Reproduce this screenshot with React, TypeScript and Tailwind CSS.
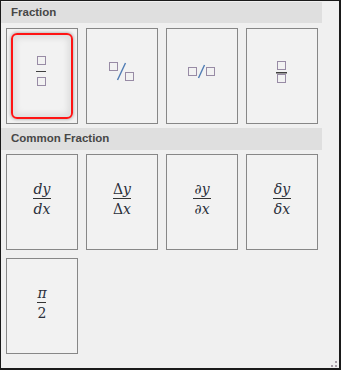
import React from "react";

const DOT_A = "#b8783a";
const DOT_B = "#5a60b4";

function DotBox({ x, y, w = 8, h = 8 }: { x: number; y: number; w?: number; h?: number }) {
  return (
    <g>
      <rect x={x + 0.5} y={y + 0.5} width={w} height={h} fill="none" stroke={DOT_A} strokeWidth={1} strokeDasharray="1 1" />
      <rect x={x + 0.5} y={y + 0.5} width={w} height={h} fill="none" stroke={DOT_B} strokeWidth={1} strokeDasharray="1 1" strokeDashoffset={1} />
    </g>
  );
}

function Tile({ children, selected = false }: { children?: React.ReactNode; selected?: boolean }) {
  return (
    <div className="relative w-[72px] h-[96px] border border-[#878787] bg-[#f2f2f2]">
      {selected && (
        <div className="absolute inset-[4px] rounded-[6px] border-2 border-[#ff1414] shadow-[0_0_3px_1px_rgba(0,0,0,0.22),inset_0_0_6px_3px_rgba(0,0,0,0.09)]" />
      )}
      <div className="absolute inset-0 flex items-center justify-center">{children}</div>
    </div>
  );
}

function IconSvg({ children }: { children: React.ReactNode }) {
  return (
    <svg width="70" height="94" viewBox="0 0 70 94" className="block">
      {children}
    </svg>
  );
}

function Frac({ num, den, w }: { num: React.ReactNode; den: React.ReactNode; w: number }) {
  return (
    <div
      className="flex flex-col items-center text-[#2a2f3a] mt-[-6px]"
      style={{ fontFamily: '"DejaVu Serif", "Liberation Serif", serif' }}
    >
      <div className="text-[14px] leading-[14px] italic">{num}</div>
      <div className="h-px bg-[#333] mt-[2px]" style={{ width: w }} />
      <div className="text-[14px] leading-[14px] italic mt-[3px]">{den}</div>
    </div>
  );
}

function Header({ children, h }: { children: React.ReactNode; h: string }) {
  return (
    <div
      className={`w-[321px] ${h} bg-[#dfdfdf] flex items-center pl-[10px] text-[11.5px] font-bold text-[#474747]`}
      style={{ fontFamily: '"Liberation Sans", Arial, sans-serif' }}
    >
      {children}
    </div>
  );
}

export default function App() {
  return (
    <div className="relative w-[341px] h-[370px] bg-[#f0f0f0] border-l border-t border-r-2 border-b-2 border-[#1a1a1a] overflow-hidden">
      <div className="mt-px">
        <Header h="h-[21px]">Fraction</Header>
      </div>
      <div className="mt-[5px] ml-[5px] grid grid-cols-[repeat(4,72px)] gap-2">
        <Tile selected>
          <IconSvg>
            <DotBox x={30} y={27} />
            <rect x={29} y={42} width={10} height={1} fill="#404040" />
            <DotBox x={30} y={48} />
          </IconSvg>
        </Tile>
        <Tile>
          <IconSvg>
            <DotBox x={22} y={33} />
            <line x1={38.5} y1={34} x2={30.5} y2={51} stroke="#4f7cb4" strokeWidth={1.4} />
            <DotBox x={38} y={43} />
          </IconSvg>
        </Tile>
        <Tile>
          <IconSvg>
            <DotBox x={21} y={38} />
            <line x1={37.5} y1={36} x2={31.5} y2={49} stroke="#4f7cb4" strokeWidth={1.4} />
            <DotBox x={39} y={38} />
          </IconSvg>
        </Tile>
        <Tile>
          <IconSvg>
            <DotBox x={30} y={32} />
            <rect x={29} y={43} width={11} height={1.5} fill="#404040" />
            <DotBox x={30} y={45} />
          </IconSvg>
        </Tile>
      </div>
      <div className="mt-1">
        <Header h="h-[22px]">Common Fraction</Header>
      </div>
      <div className="mt-1 ml-[5px] grid grid-cols-[repeat(4,72px)] gap-2">
        <Tile>
          <Frac num="dy" den="dx" w={18} />
        </Tile>
        <Tile>
          <Frac num={<><span className="not-italic">Δ</span>y</>} den={<><span className="not-italic">Δ</span>x</>} w={18} />
        </Tile>
        <Tile>
          <Frac num="∂y" den="∂x" w={18} />
        </Tile>
        <Tile>
          <Frac num="δy" den="δx" w={18} />
        </Tile>
        <Tile>
          <Frac num="π" den={<span className="not-italic">2</span>} w={9} />
        </Tile>
      </div>
      <svg className="absolute left-[329px] top-[359px]" width="8" height="8" viewBox="0 0 8 8">
        <rect x={5} y={1} width={2} height={2} fill="#a89ea8" />
        <rect x={1} y={5} width={2} height={2} fill="#a89ea8" />
        <rect x={5} y={5} width={2} height={2} fill="#a89ea8" />
      </svg>
    </div>
  );
}
